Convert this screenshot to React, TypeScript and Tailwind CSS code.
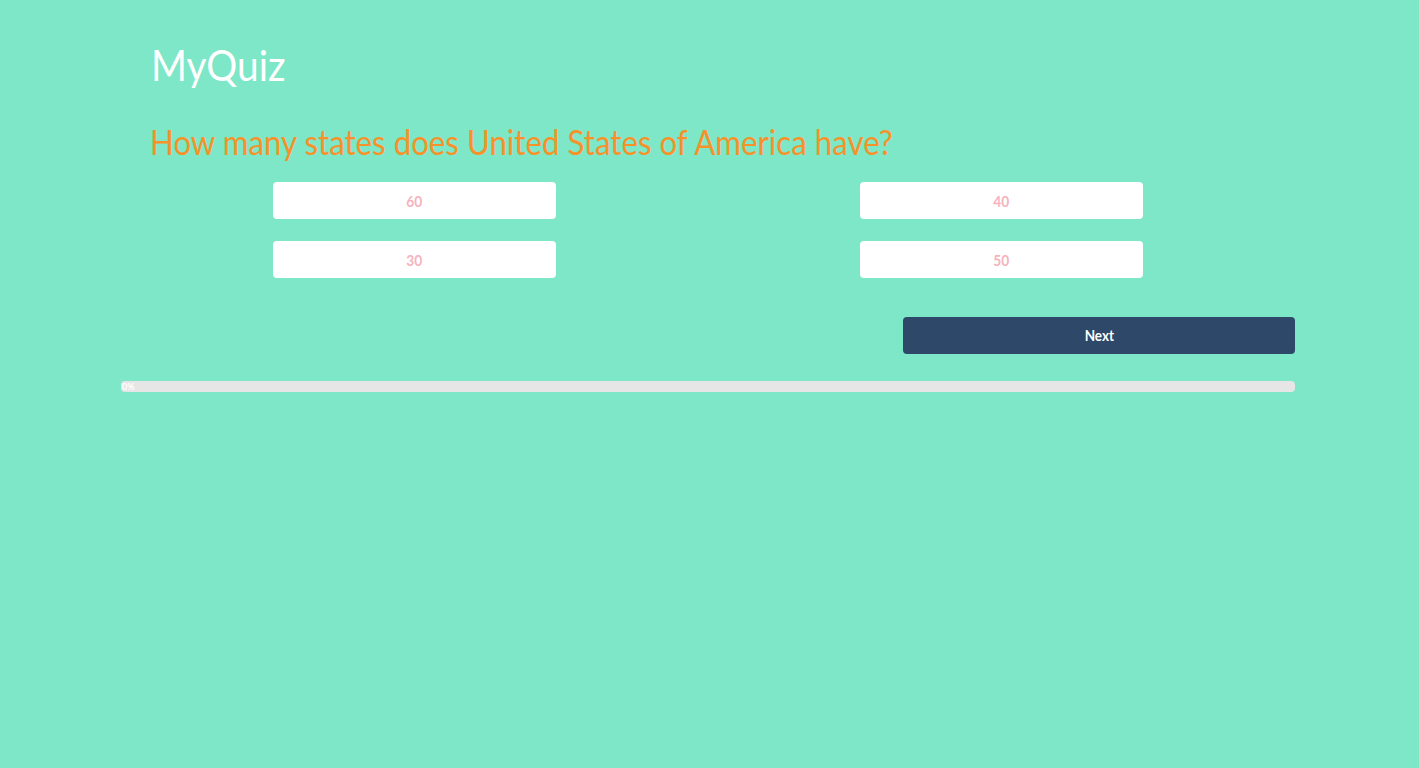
import React from "react";

const answers = ["60", "40", "30", "50"];

export default function App() {
  return (
    <div
      className="min-h-screen w-full bg-[#7ee7c7]"
      style={{ fontFamily: "Lato, 'Open Sans', sans-serif" }}
    >
      <div className="ml-[121px] w-[1174px] pt-[36px]">
        <h1 className="pl-[30px] text-[43px] leading-[58px] text-white">
          <span className="inline-block origin-left scale-x-[0.9]">MyQuiz</span>
        </h1>
        <h2 className="mt-[22px] whitespace-nowrap pl-[29px] text-[35px] leading-[50px] text-[#f7922a]">
          <span className="inline-block origin-left scale-x-[0.893]">
            How many states does United States of America have?
          </span>
        </h2>
        <div className="mt-[16px] grid grid-cols-2 gap-y-[22px]">
          {answers.map((a) => (
            <div key={a} className="flex justify-center">
              <button className="h-[37px] w-[283px] rounded-[4px] bg-white text-[16px] font-bold text-[#f6b2bd]">
                <span className="inline-block scale-x-[0.86]">{a}</span>
              </button>
            </div>
          ))}
        </div>
        <div className="mt-[39px] flex justify-end">
          <button className="h-[37px] w-[392px] rounded-[4px] bg-[#2d4869] text-[15px] font-bold text-white">
            <span className="inline-block scale-x-[0.9]">Next</span>
          </button>
        </div>
        <div className="mt-[27px] h-[11px] w-full rounded-[4px] bg-[#e6e6e6]">
          <div className="pl-[1px] text-[9px] font-bold leading-[11px] text-white">0%</div>
        </div>
      </div>
    </div>
  );
}
